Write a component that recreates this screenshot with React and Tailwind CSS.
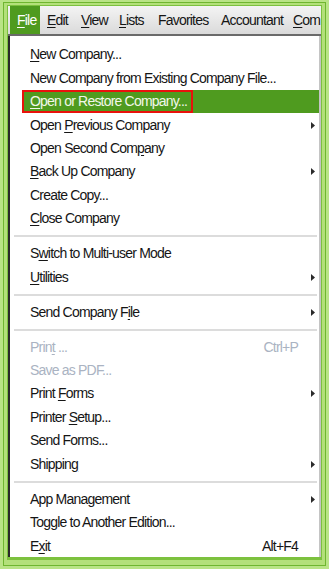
import React from 'react';

// File menu of the desktop app, drawn inside a green screenshot frame
const items = [
  { label: 'New Company...', u: 0 },
  { label: 'New Company from Existing Company File...' },
  { label: 'Open or Restore Company...', u: 0, active: true },
  { label: 'Open Previous Company', u: 5, sub: true },
  { label: 'Open Second Company', u: 15 },
  { label: 'Back Up Company', u: 0, sub: true },
  { label: 'Create Copy...' },
  { label: 'Close Company', u: 0 },
  { sep: true },
  { label: 'Switch to Multi-user Mode', u: 1 },
  { label: 'Utilities', u: 0, sub: true },
  { sep: true },
  { label: 'Send Company File', u: 14, sub: true },
  { sep: true },
  { label: 'Print ...', u: 4, disabled: true, shortcut: 'Ctrl+P' },
  { label: 'Save as PDF...', disabled: true },
  { label: 'Print Forms', u: 6, sub: true },
  { label: 'Printer Setup...', u: 8 },
  { label: 'Send Forms...' },
  { label: 'Shipping', u: 7, sub: true },
  { sep: true },
  { label: 'App Management', sub: true },
  { label: 'Toggle to Another Edition...' },
  { label: 'Exit', u: 1, shortcut: 'Alt+F4' },
];

// Renders a label with its mnemonic letter underlined
function Label({ text, u }) {
  if (u === undefined) return <>{text}</>;
  return (
    <>
      {text.slice(0, u)}
      <span className="underline underline-offset-2">{text[u]}</span>
      {text.slice(u + 1)}
    </>
  );
}

function Arrow() {
  return (
    <svg width="4" height="7" viewBox="0 0 4 7">
      <path d="M0 0 L4 3.5 L0 7 Z" fill="#2b2b2b" />
    </svg>
  );
}

const menuBar = [
  { label: 'Edit', u: 0, w: 'w-[34px]' },
  { label: 'View', u: 0, w: 'w-[38px]' },
  { label: 'Lists', u: 0, w: 'w-[39px]' },
  { label: 'Favorites', w: 'w-[63px]' },
  { label: 'Accountant', w: 'w-[72px]' },
  { label: 'Com', u: 0, w: 'w-[30px]' },
];

export default function App() {
  return (
    <div
      className="w-[329px] h-[569px] overflow-hidden bg-[#a9db69] text-[14px] tracking-[-0.8px] text-[#151515]"
      style={{ fontFamily: '"Liberation Sans", Arial, sans-serif' }}
    >
      {/* striped green frame */}
      <div className="w-full h-full border-t-2 border-x-[3px] border-b-[3px] border-[#b9e486]">
        <div className="w-full h-full border border-[#6fb630]">
          <div className="w-full h-full border-t-2 border-x-[3px] border-b-[5px] border-[#b3e07a]">
            <div className="w-full h-full border border-b-[3px] border-[#7cc13e]">
              <div className="flex flex-col w-full h-full bg-white overflow-hidden">
                {/* Menu bar */}
                <div className="h-[30px] flex items-center bg-gradient-to-b from-[#f4f4f4] to-[#dadada] border-b-2 border-[#6a6a6a] shrink-0">
                  <div className="ml-[2px] h-[28px] w-[30px] shrink-0 flex items-center pl-[7px] bg-[#4f9b1f] text-white">
                    <Label text="File" u={0} />
                  </div>
                  <div className="flex items-center ml-[7px]">
                    {menuBar.map((m) => (
                      <span key={m.label} className={`${m.w} shrink-0 whitespace-nowrap`}>
                        <Label text={m.label} u={m.u} />
                      </span>
                    ))}
                  </div>
                </div>

                {/* Dropdown panel */}
                <div className="flex-1 min-h-0 overflow-hidden flex flex-col pt-[7px] border-l-2 border-[#2a2a2a] border-r-2 border-r-[#c4c4c4]">
                  {items.map((it, i) =>
                    it.sep ? (
                      <div key={i} className="h-[11.5px] shrink-0 flex items-center ml-[4px] mr-[2px]">
                        <div className="w-full h-[2px] bg-[#dcdcdc]" />
                      </div>
                    ) : it.active ? (
                      <div key={i} className="h-[23.45px] shrink-0 ml-[12px] flex items-center bg-[#4f9b1f] text-[#f2f7ea]">
                        <span className="h-full flex items-center border-2 border-[#e8120c] pl-[6px] pr-[4px] whitespace-nowrap">
                          <Label text={it.label} u={it.u} />
                        </span>
                      </div>
                    ) : (
                      <div
                        key={i}
                        className={`h-[23.45px] shrink-0 flex items-center pl-[20px] pr-[4px] whitespace-nowrap ${
                          it.disabled ? 'text-[#aab3c2]' : ''
                        }`}
                      >
                        <span className="flex-1">
                          <Label text={it.label} u={it.u} />
                        </span>
                        {it.shortcut && <span>{it.shortcut}</span>}
                        <span className="w-[17px] flex justify-end">{it.sub && <Arrow />}</span>
                      </div>
                    )
                  )}
                </div>
              </div>
            </div>
          </div>
        </div>
      </div>
    </div>
  );
}
